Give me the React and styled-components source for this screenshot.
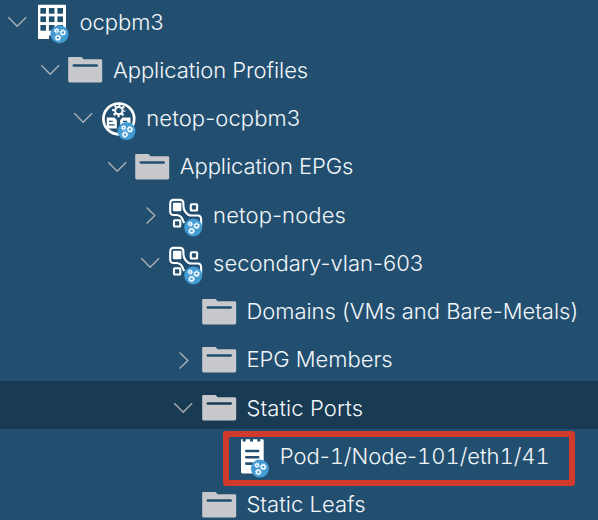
import React from "react";
import styled, { createGlobalStyle } from "styled-components";

const GlobalStyle = createGlobalStyle`
  body { margin: 0; background: #224f70; overflow: hidden; }
`;

const Tree = styled.div`
  width: 598px;
  height: 520px;
  overflow: hidden;
  background: #224f70;
  font-family: Inter, "Liberation Sans", sans-serif;
  font-weight: 300;
  font-size: 22px;
  color: #f4f7fa;
`;

const Rows = styled.div`
  margin-top: -5px;
`;

const Row = styled.div`
  position: relative;
  display: flex;
  box-sizing: border-box;
  height: 48.25px;
  padding-left: ${(p) => 7.5 + p.$depth * 33.37}px;
  background: ${(p) => (p.$selected ? "#183a53" : "transparent")};
`;

const Toggle = styled.div`
  width: 27.5px;
  flex: none;
  padding-top: 16.8px;
`;

const IconSlot = styled.div`
  width: 44.6px;
  flex: none;
  padding-top: 9px;
`;

const Svg = styled.svg`
  display: block;
  overflow: visible;
`;

const Label = styled.span`
  line-height: 30px;
  padding-top: 11.6px;
  white-space: nowrap;
  letter-spacing: ${(p) => p.$spacing}px;
`;

const Digits = styled.span`
  font-variant-numeric: tabular-nums;
`;

const Highlight = styled.div`
  position: absolute;
  left: 223px;
  top: 2px;
  width: 352px;
  height: 55px;
  box-sizing: border-box;
  border: 6px solid #d0392c;
  border-radius: 3px;
  z-index: 1;
`;

const Chevron = ({ open }) => (
  <Svg width="19" height="20" fill="none" stroke="#a9b0b5" strokeWidth="1.4">
    <path d={open ? "M.3 5.3 9.2 14.2 18.1 5.3" : "M5.6 2.5 13.8 10.5 5.6 18.5"} />
  </Svg>
);

const Gear = ({ x, y, r }) => (
  <g transform={`translate(${x} ${y})`} fill="none" stroke="#fff">
    <circle r={r} strokeWidth="1.3" />
    <circle r={r + 0.9} strokeWidth="1" strokeDasharray={`${(r + 0.9) * 0.3927} ${(r + 0.9) * 0.3927}`} />
  </g>
);

const Badge = () => (
  <g>
    <circle cx="24.5" cy="30.2" r="9" fill="#449cd4" />
    <Gear x={21.6} y={26.8} r={1.4} />
    <Gear x={27.9} y={28.5} r={1.9} />
    <Gear x={22.9} y={33.7} r={1.9} />
  </g>
);

const Folder = ({ ink }) => (
  <g>
    <path
      fill="#c7c8cc"
      d="M1.1 5.1h11.800q1 0 1.600.9l1 1.300h17.200q1.500 0 1.500 1.300v20.500q0 1.400-1.500 1.400H1.600Q.2 30.500.2 29.100V6.100Q.2 5.100 1.100 5.100Z"
    />
    <path d="M5.800 13.400H28.700" stroke={ink} strokeWidth="2.500" strokeLinecap="round" />
  </g>
);

const Building = () => (
  <g>
    <path fill="#fff" d="M4 .8h26q1 0 1 1V32H14v3H3V1.800Q3 .8 4 .8Z" />
    <g fill="#224f70">
      {[4, 12.4, 21].map((y) =>
        [5.4, 13.9, 22.4].map((x) => <rect key={`${x}-${y}`} x={x} y={y} width="5.6" height="5.7" />)
      )}
      <rect x="14" y="31.500" width="6" height="4" />
    </g>
    <Badge />
  </g>
);

const Profile = () => (
  <g transform="translate(0 -.1)">
    <circle cx="16.800" cy="18" r="15.400" fill="none" stroke="#fff" strokeWidth="2.700" />
    <path fill="#fff" d="M4.800 16.700h7.700l2.300 2.300v8.700H4.800ZM18.200 19l2.300-2.300h8v11H18.200Z" />
    <path d="M7 20.500h3.800M7 24h5.600M21 20.500h4" stroke="#224f70" strokeWidth="1.300" />
    <g transform="translate(16.800 9.700)" fill="none" stroke="#fff">
      <circle r="3.700" strokeWidth="2" />
      <circle r="5.500" strokeWidth="2.300" strokeDasharray="2.160 2.160" strokeDashoffset="1.080" />
    </g>
    <Badge />
  </g>
);

const Epg = () => (
  <g transform="translate(.7 .2)">
    <g fill="none" stroke="#fff" strokeWidth="2.100">
      <path d="M15.500 26C13.500 21 12.500 18 8 17.800H5Q1.500 17.800 1.500 14.300V6.200Q1.500 2.700 5 2.700H11.200Q14.700 2.700 14.700 6.200V8.500C14.700 13 18 18.300 23 18.300H29Q32.400 18.300 32.400 22V29" />
      <rect x="22.100" y="7" width="6.300" height="6.300" rx=".8" />
      <rect x="5.300" y="23" width="6.300" height="6.300" rx=".8" />
    </g>
    <rect x="4.200" y="5.500" width="8.500" height="8.500" rx="1" fill="#fff" />
    <Badge />
  </g>
);

const Port = () => (
  <g transform="translate(.4 .4)">
    <path
      fill="#fff"
      d="M5.600.8h1.700v2.300h3V.8h4.300v2.300h3V.8h4.300v2.300h3V.8h2q1.400 0 1.400 1.400V35H7q-1.400 0-1.400-1.400Z"
    />
    <path d="M10.900 12.600H22.800M10.900 18.900H22.800M10.900 25.200H16.500" stroke="#224f70" strokeWidth="2.600" strokeLinecap="round" />
    <Badge />
  </g>
);

const icons = { folder: Folder, building: Building, profile: Profile, epg: Epg, port: Port };

const items = [
  { depth: 0, open: true, icon: "building", label: "ocpbm3", spacing: -0.05 },
  { depth: 1, open: true, icon: "folder", label: "Application Profiles", spacing: -0.06 },
  { depth: 2, open: true, icon: "profile", label: "netop-ocpbm3", spacing: 0.1 },
  { depth: 3, open: true, icon: "folder", label: "Application EPGs", spacing: -0.06 },
  { depth: 4, open: false, icon: "epg", label: "netop-nodes", spacing: 0.12 },
  { depth: 4, open: true, icon: "epg", label: "secondary-vlan-603", spacing: 0.01 },
  { depth: 5, icon: "folder", label: "Domains (VMs and Bare-Metals)", spacing: -0.02 },
  { depth: 5, open: false, icon: "folder", label: "EPG Members", spacing: -0.03 },
  { depth: 5, open: true, icon: "folder", label: "Static Ports", spacing: 0.1, selected: true },
  { depth: 6, icon: "port", label: "Pod-1/Node-101/eth1/41", spacing: -0.03, tabular: true, highlighted: true },
  { depth: 5, icon: "folder", label: "Static Leafs", spacing: 0.03 },
];

const LabelText = ({ text, tabular }) =>
  tabular
    ? text.split(/(\d+)/).map((part, i) => (i % 2 ? <Digits key={i}>{part}</Digits> : part))
    : text;

export default function App() {
  return (
    <Tree>
      <GlobalStyle />
      <Rows>
        {items.map((item) => {
          const Icon = icons[item.icon];
          return (
            <Row key={item.label} $depth={item.depth} $selected={item.selected}>
              <Toggle>{item.open !== undefined && <Chevron open={item.open} />}</Toggle>
              <IconSlot>
                <Svg width="36" height="40"><Icon ink={item.selected ? "#183a53" : "#224f70"} /></Svg>
              </IconSlot>
              <Label $spacing={item.spacing}>
                <LabelText text={item.label} tabular={item.tabular} />
              </Label>
              {item.highlighted && <Highlight />}
            </Row>
          );
        })}
      </Rows>
    </Tree>
  );
}
